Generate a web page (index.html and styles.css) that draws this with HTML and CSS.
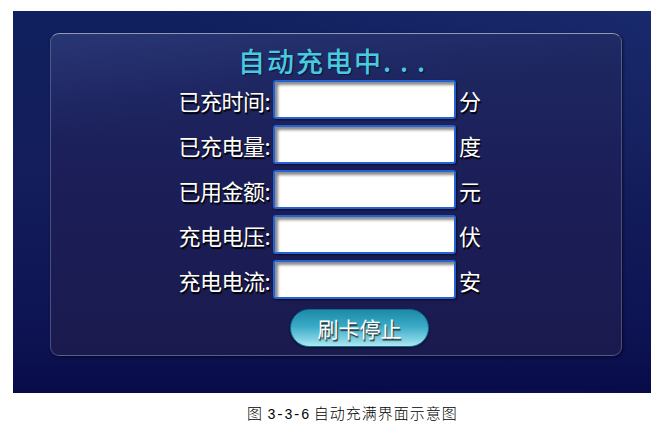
FILE: index.html
```html
<!DOCTYPE html>
<html lang="zh-CN">
<head>
    <meta charset="UTF-8">
    <meta name="viewport" content="width=device-width, initial-scale=1.0">
    <title>自动充满界面</title>
    <link rel="stylesheet" href="styles.css">
</head>
<body>
    <div id="screen">
        <div id="panel">
            <h1 class="title">自动充电中<span class="dots">...</span></h1>
            <div class="rows">
                <label class="label">已充时间:</label>
                <input class="field" type="text">
                <span class="unit">分</span>

                <label class="label">已充电量:</label>
                <input class="field" type="text">
                <span class="unit">度</span>

                <label class="label">已用金额:</label>
                <input class="field" type="text">
                <span class="unit">元</span>

                <label class="label">充电电压:</label>
                <input class="field" type="text">
                <span class="unit">伏</span>

                <label class="label">充电电流:</label>
                <input class="field" type="text">
                <span class="unit">安</span>
            </div>
            <button class="stop-btn">刷卡停止</button>
        </div>
    </div>
    <p class="caption">图 <span class="num">3-3-6</span> 自动充满界面示意图</p>
</body>
</html>
```

FILE: styles.css
```css
body {
    margin: 0;
    background-color: #fff;
    font-family: "Noto Sans CJK SC", "Noto Sans", sans-serif;
}
#screen {
    width: 638px;
    height: 382px;
    margin: 11px 0 0 13px;
    padding-top: 22px;
    box-sizing: border-box;
    overflow: hidden;
    background:
        radial-gradient(ellipse 700px 120px at 75% 125%, rgba(0, 0, 0, 0) 70%, rgba(60, 80, 170, 0.16) 76%, rgba(0, 0, 0, 0) 84%),
        linear-gradient(200deg, rgba(50, 70, 150, 0.25) 0%, rgba(0, 0, 0, 0) 30%),
        linear-gradient(180deg, #10205e 0%, #141e5c 40%, #0d1352 85%, #080b48 100%);
}
#panel {
    width: 572px;
    height: 323px;
    margin-left: 37px;
    box-sizing: border-box;
    border: 1px solid rgba(150, 160, 200, 0.4);
    border-top-color: rgba(200, 205, 230, 0.7);
    border-radius: 9px;
    box-shadow: 1px 1px 3px rgba(0, 0, 0, 0.6);
    background:
        linear-gradient(172deg, rgba(60, 80, 150, 0.35) 0%, rgba(40, 55, 130, 0.15) 18%, rgba(0, 0, 0, 0) 26%),
        linear-gradient(180deg, #1e2962 0%, #1c1e58 45%, #1a1a4e 100%);
    padding-top: 10px;
    display: flex;
    flex-direction: column;
}
.title {
    margin: 0;
    text-align: center;
    font-size: 27px;
    font-weight: 500;
    line-height: 34px;
    letter-spacing: 2px;
    color: #4acbdd;
    text-shadow: 1px 1px 1px #0a1240;
}
.dots {
    letter-spacing: 9px;
}
.rows {
    display: grid;
    grid-template-columns: 219px 183px auto;
    grid-auto-rows: 39px;
    column-gap: 3px;
    row-gap: 6px;
    margin-top: 2px;
    align-items: center;
}
.label,
.unit {
    font-size: 22px;
    color: #fff;
    text-shadow: 1px 2px 1px #000;
}
.label {
    text-align: right;
    letter-spacing: -0.5px;
}
.field {
    width: 183px;
    height: 39px;
    box-sizing: border-box;
    margin: 0;
    border: 2px solid #2463d4;
    border-radius: 3px;
    background-color: #fff;
    box-shadow: inset 3px 3px 3px #8a8a8a, 1px 1px 2px rgba(0, 0, 0, 0.6);
}
.stop-btn {
    width: 139px;
    height: 38px;
    margin: 10px 0 0 239px;
    border: 1px solid #0f6e8e;
    border-radius: 19px;
    background: linear-gradient(180deg, #1c8aa8 0%, #3aaac6 45%, #7ccfe2 80%, #aee8f3 100%);
    color: #fff;
    font-family: "Noto Sans CJK SC", sans-serif;
    font-size: 21px;
    text-shadow: 1px 2px 1px #333;
    box-shadow: 0 1px 2px rgba(0, 0, 0, 0.5);
    padding: 0;
}
.caption {
    margin: 9px 0 0 0;
    padding-left: 247px;
    font-size: 15px;
    font-weight: 300;
    letter-spacing: 1px;
    color: #000;
}
.caption .num {
    font-family: "Liberation Mono", monospace;
    font-size: 14px;
    letter-spacing: 0;
}
```
